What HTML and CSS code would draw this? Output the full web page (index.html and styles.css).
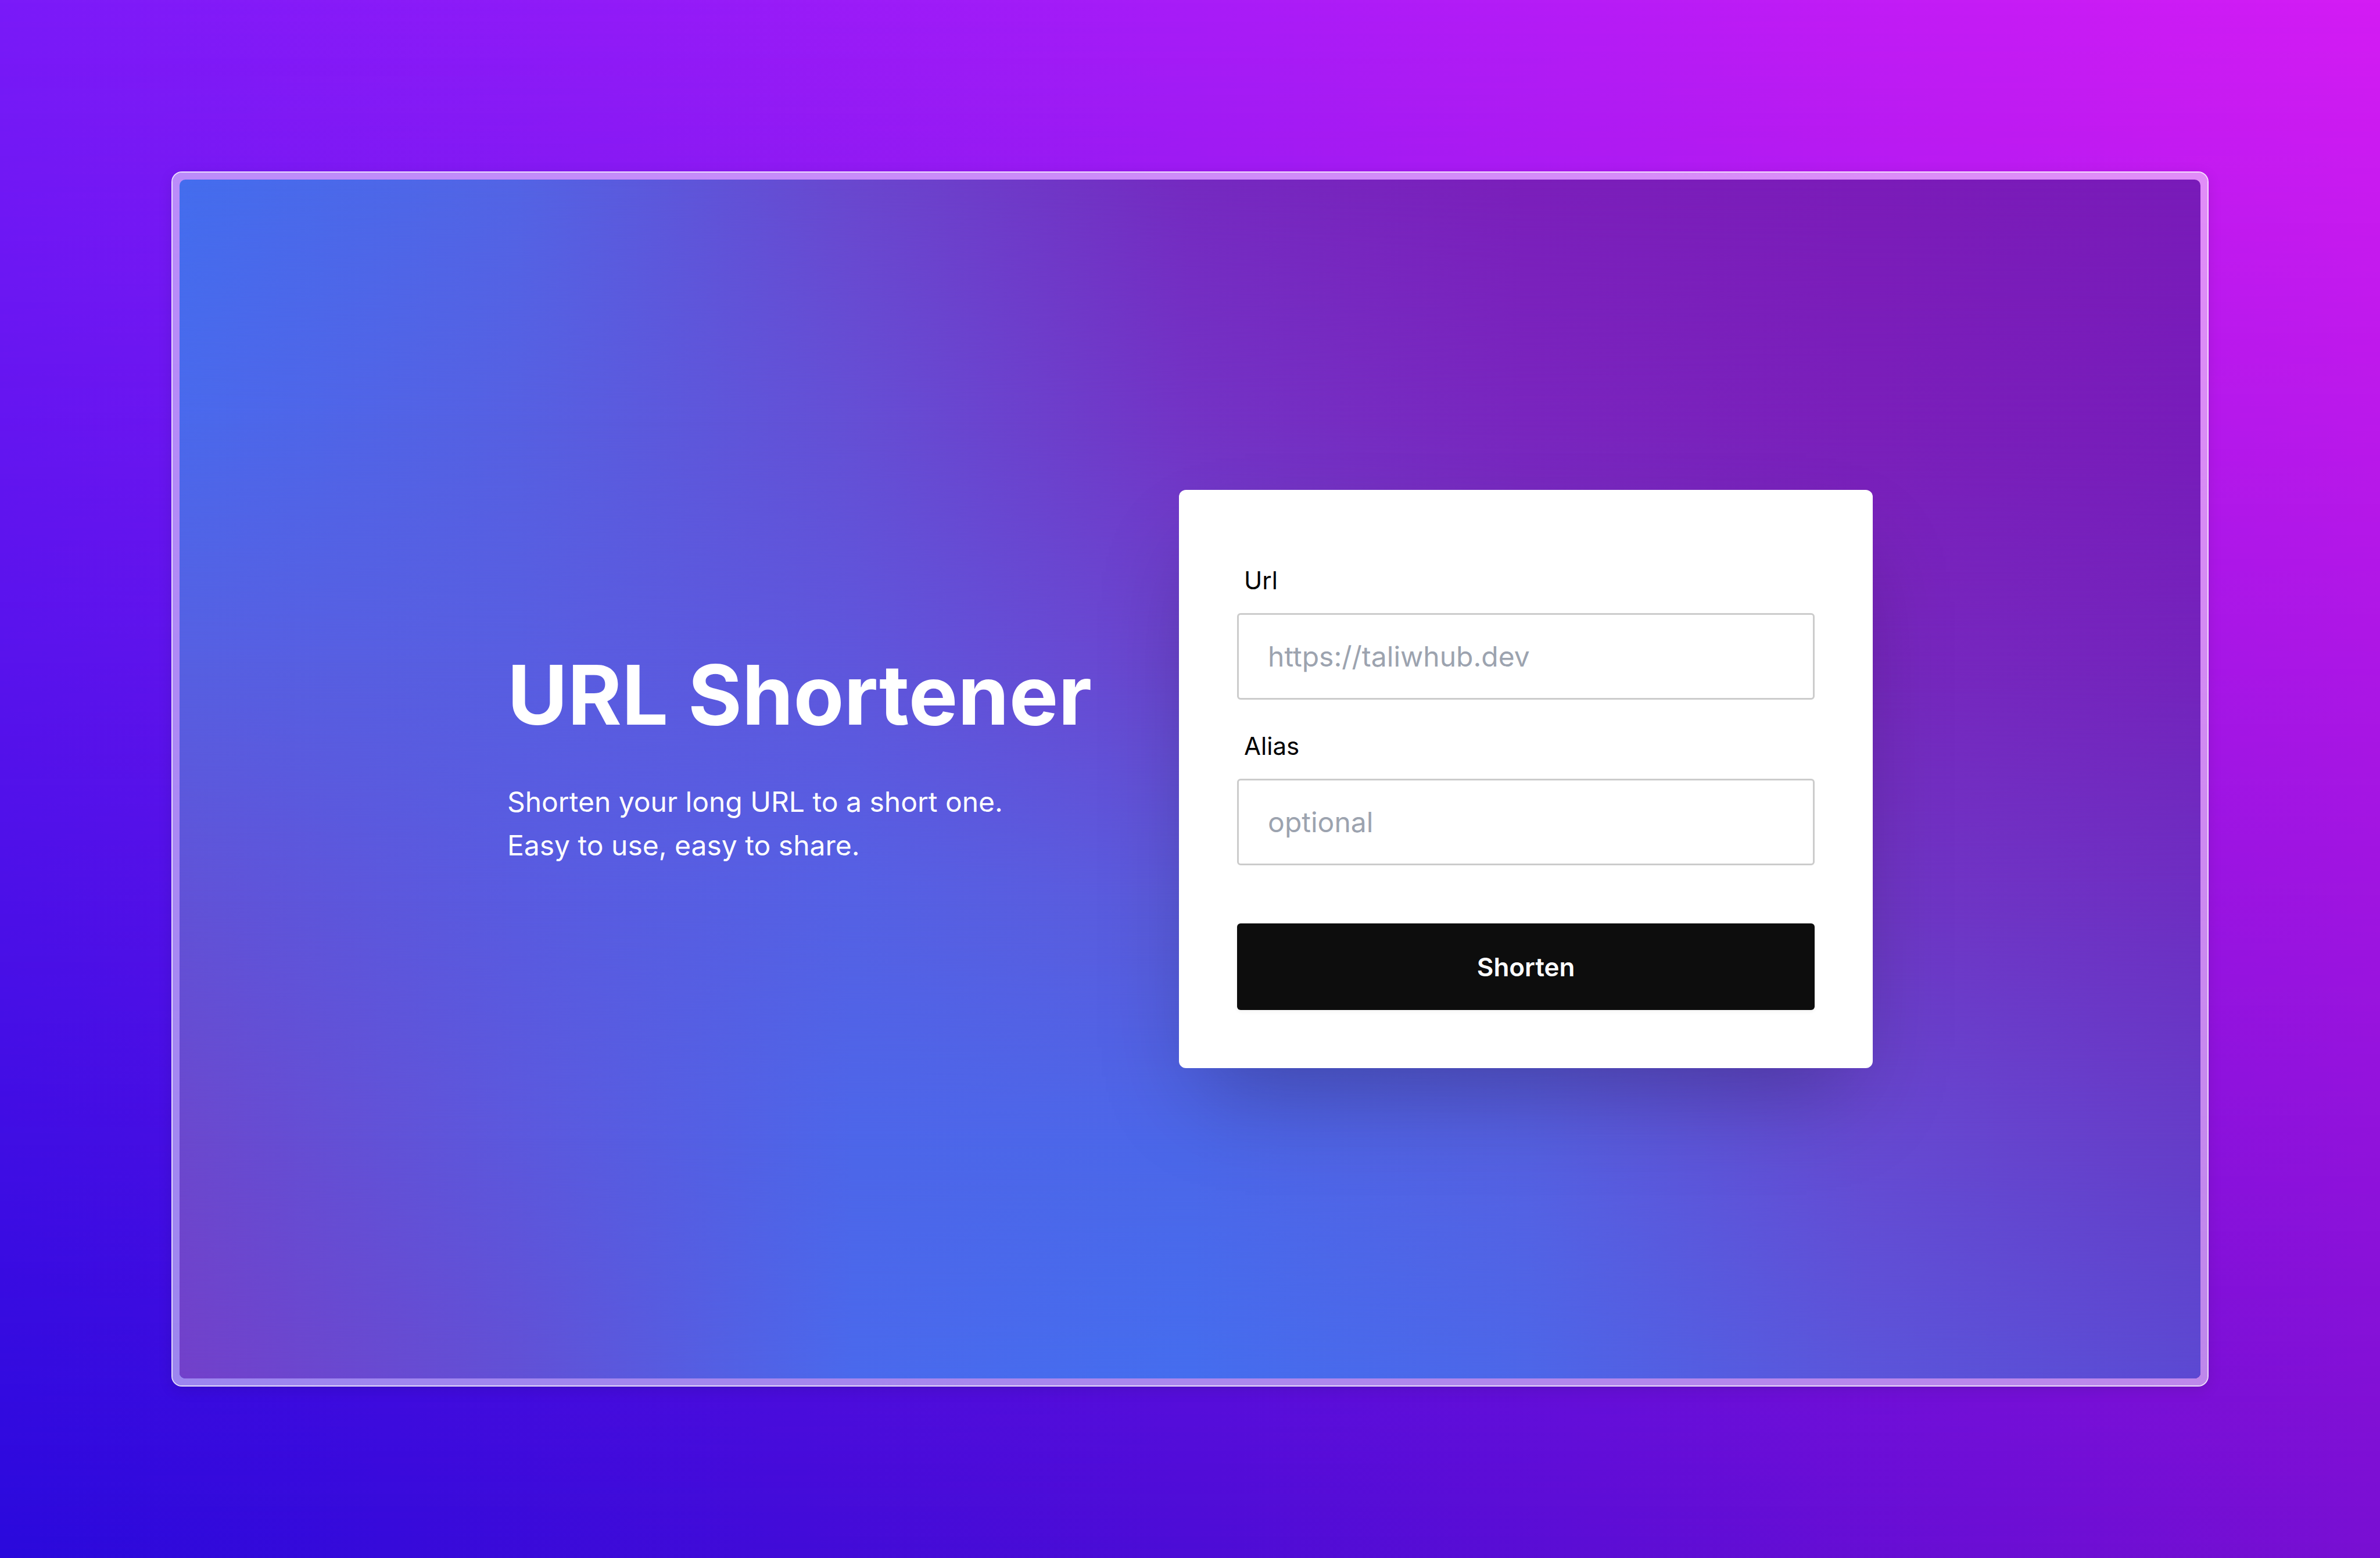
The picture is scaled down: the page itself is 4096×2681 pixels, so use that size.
FILE: index.html
```html
<!DOCTYPE html>
<html lang="en">
<head>
<meta charset="utf-8">
<meta name="viewport" content="width=device-width, initial-scale=1">
<title>URL Shortener</title>
<link rel="stylesheet" href="styles.css">
</head>
<body class="backdrop">
<div class="frame">
  <main class="page">
    <div class="mesh" aria-hidden="true">
      <div class="mesh-row mesh-row-1"></div>
      <div class="mesh-row mesh-row-2"></div>
      <div class="mesh-row mesh-row-3"></div>
      <div class="mesh-row mesh-row-4"></div>
      <div class="mesh-row mesh-row-5"></div>
      <div class="mesh-row mesh-row-6"></div>
    </div>
    <section class="intro">
      <h1 class="title">URL Shortener</h1>
      <p class="lead">Shorten your long URL to a short one.<br>Easy to use, easy to share.</p>
    </section>
    <form class="card">
      <div class="fields">
        <div class="field">
          <label class="label" for="url">Url</label>
          <input class="input" id="url" type="text" placeholder="https://taliwhub.dev">
        </div>
        <div class="field">
          <label class="label" for="alias">Alias</label>
          <input class="input" id="alias" type="text" placeholder="optional">
        </div>
      </div>
      <button class="submit" type="button">Shorten</button>
    </form>
  </main>
</div>
</body>
</html>
```
FILE: styles.css
```css
*, *::before, *::after { box-sizing: border-box; }

body, h1, p { margin: 0; }

.backdrop {
  position: relative;
  display: flex;
  min-height: 100vh;
  padding: 295px;
  font-family: Inter, "Liberation Sans", sans-serif;
  background: linear-gradient(to right, #7a1af8, #a81cf7 50%, #d41cf4);
}

/* Bottom row of the backdrop colours, faded in from the top edge */
.backdrop::before {
  content: "";
  position: absolute;
  inset: 0;
  background: linear-gradient(to right, #2a09dc, #4c0cd6 50%, #780fd2);
  mask-image: linear-gradient(transparent, #000);
}

.frame {
  position: relative;
  display: flex;
  flex: 1;
  padding: 12px;
  border: 2px solid rgba(255, 255, 255, 0.85);
  border-radius: 18px;
  background: rgba(255, 255, 255, 0.5);
  background-clip: padding-box;
  box-shadow: 0 6px 25px rgba(0, 0, 0, 0.1);
}

.page {
  position: relative;
  display: flex;
  flex: 1;
  align-items: center;
  justify-content: center;
  gap: 150px;
  overflow: hidden;
  border-radius: 10px;
}

/* Colour mesh: each row fades in over the one before it */
.mesh, .mesh-row { position: absolute; inset: 0; }

.mesh-row-1 { background: linear-gradient(to right, #446dee, #5364e5, #6a47cf, #752ac1, #7b1fbb, #7b1cb9, #791bb9); }
.mesh-row-2 { background: linear-gradient(to right, #4a69ec, #5660e2, #654fd5, #7333c5, #7925be, #7a1fba, #781cba); mask-image: linear-gradient(transparent 0%, #000 20%); }
.mesh-row-3 { background: linear-gradient(to right, #5660e2, #585ee1, #5f56dc, #6c44ce, #7533c4, #7728bf, #7423bc); mask-image: linear-gradient(transparent 20%, #000 40%); }
.mesh-row-4 { background: linear-gradient(to right, #6152d7, #595be0, #5561e4, #5c5adc, #6548d0, #6f37c6, #6e2ec2); mask-image: linear-gradient(transparent 40%, #000 60%); }
.mesh-row-5 { background: linear-gradient(to right, #6b48ce, #5c58dd, #4d66e9, #4c67e9, #5661e2, #664ad2, #663cc8); mask-image: linear-gradient(transparent 60%, #000 80%); }
.mesh-row-6 { background: linear-gradient(to right, #7240ca, #6250d5, #4a69ec, #456dee, #4d66e8, #5b55da, #5c49d2); mask-image: linear-gradient(transparent 80%, #000 100%); }

.intro {
  position: relative;
  padding-bottom: 68px;
  color: #fff;
}

.title {
  margin-bottom: 72px;
  font-size: 142px;
  font-weight: 700;
  line-height: 149px;
}

.lead { font-size: 48px; line-height: 75px; }

.card {
  position: relative;
  display: flex;
  flex-direction: column;
  gap: 100px;
  width: 1194px;
  padding: 100px;
  border-radius: 12px;
  background: #fff;
  box-shadow: 0 78px 156px -37px rgba(0, 0, 0, 0.25);
}

.fields { display: flex; flex-direction: column; gap: 24px; }

.field { display: flex; flex-direction: column; }

.label {
  padding: 25px 12px;
  font-size: 42px;
  line-height: 62px;
  color: #000;
}

.input {
  height: 149px;
  padding: 0 50px;
  border: 3px solid #ccc;
  border-radius: 6px;
  font: 400 48px/75px Inter, "Liberation Sans", sans-serif;
  color: #0d0d0d;
  background: #fff;
}

.input::placeholder { color: #9ca3af; opacity: 1; }

.submit {
  height: 149px;
  padding: 0;
  border: 0;
  border-radius: 6px;
  font: 600 44px/62px Inter, "Liberation Sans", sans-serif;
  color: #fff;
  background: #0d0d0d;
  box-shadow: 0 3px 6px rgba(0, 0, 0, 0.05);
}
```
